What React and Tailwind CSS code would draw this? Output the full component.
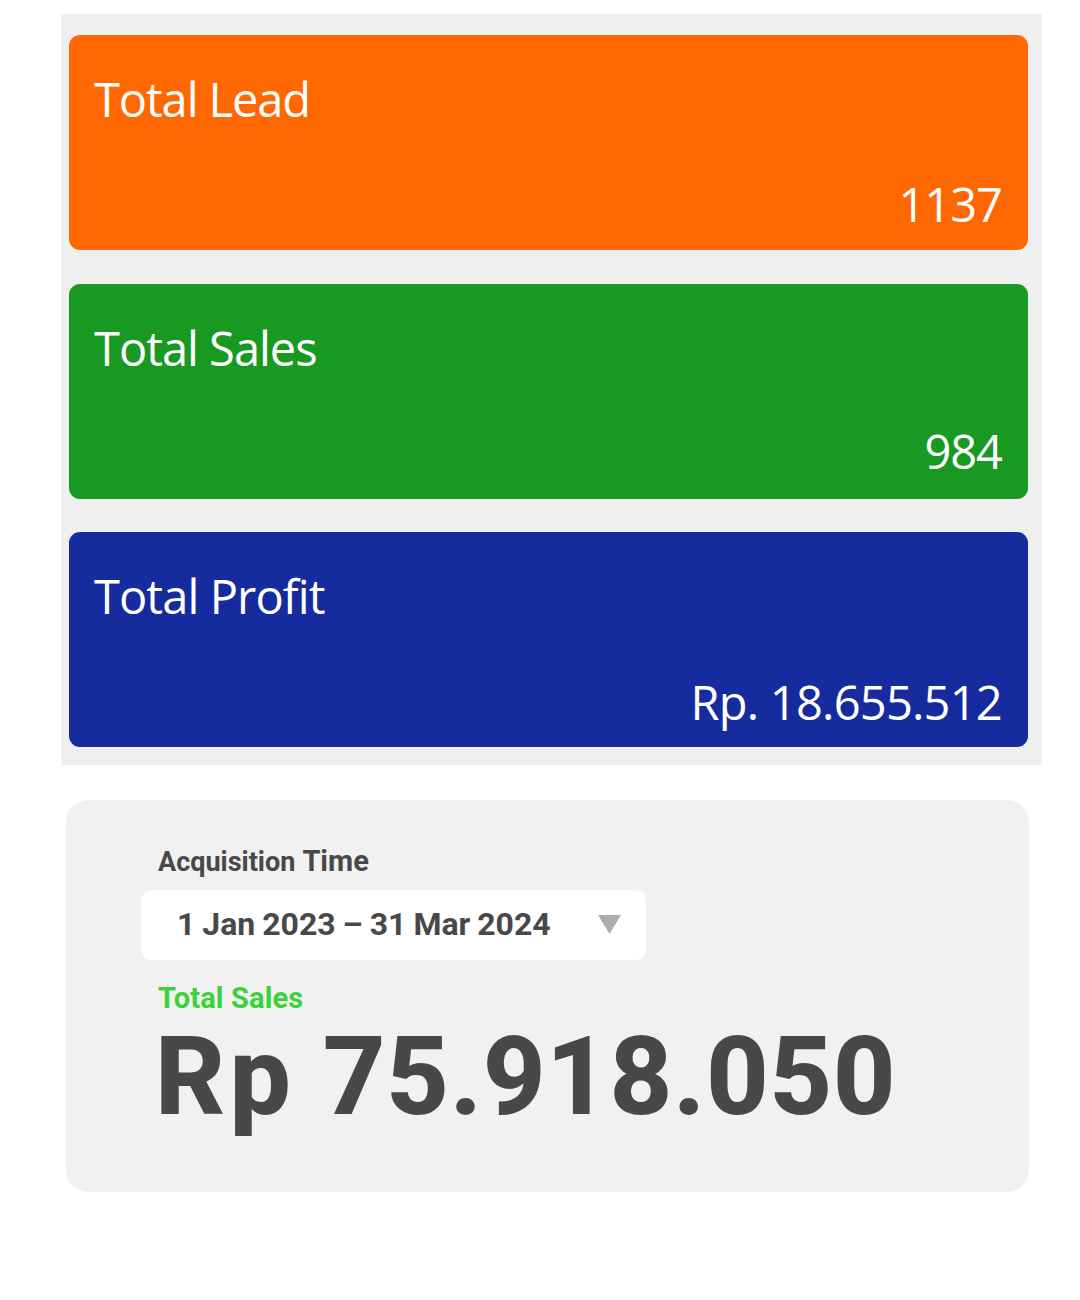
import React from 'react';

const stats = [
  {
    label: 'Total Lead',
    value: '1137',
    box: 'h-[215px] bg-[#ff6700] mb-[34px] pb-[14px]',
    labelSpacing: 'tracking-[-1.1px]',
    valueSpacing: 'tracking-[-1px]',
  },
  {
    label: 'Total Sales',
    value: '984',
    box: 'h-[215px] bg-[#189922] mb-[33px] pb-[16px]',
    labelSpacing: 'tracking-[-1px]',
    valueSpacing: 'tracking-[-1px]',
  },
  {
    label: 'Total Profit',
    value: 'Rp. 18.655.512',
    box: 'h-[215px] bg-[#162b9d] pb-[13px]',
    labelSpacing: 'tracking-[-0.9px]',
    valueSpacing: 'tracking-[-0.75px]',
  },
];

function StatCard({ stat }) {
  return (
    <div
      className={`flex flex-col justify-between rounded-[11px] pt-[32px] pr-[26px] pl-[25px] font-['Open_Sans',sans-serif] text-[47px] leading-[64px] font-[430] text-white ${stat.box}`}
    >
      <div>
        <span className={stat.labelSpacing}>{stat.label}</span>
      </div>
      <div className="text-right">
        <span className={stat.valueSpacing}>{stat.value}</span>
      </div>
    </div>
  );
}

function SalesSummary() {
  return (
    <div className="mt-[35px] ml-[66px] h-[392px] w-[963px] rounded-[22px] bg-[#f1f1f1] pt-[44px] pl-[75px] font-['Roboto',sans-serif] font-bold text-[#484848]">
      <div className="flex h-[46px] items-baseline gap-[7px] pl-[17px] whitespace-nowrap">
        <span className="text-[27px] leading-[34px]">Acquisition</span>
        <span className="text-[29px] leading-[34px]">Time</span>
      </div>

      {/* Date range picker */}
      <div className="flex h-[70px] w-[505px] items-center justify-between rounded-[11px] bg-white pr-[25px] pb-[2px] pl-[36px]">
        <span className="text-[32px] leading-[38px] [word-spacing:-1px] whitespace-nowrap">
          1 Jan 2023 – 31 Mar 2024
        </span>
        <svg width="23" height="19" viewBox="0 0 23 19" fill="#adadad">
          <path d="M0 0H23L11.5 19Z" />
        </svg>
      </div>

      <div className="mt-[20px] pl-[17px] text-[29px] leading-[36px] tracking-[0.15px] text-[#3bd13b]">
        <span>Total Sales</span>
      </div>
      <div className="flex gap-[28px] pl-[14px] text-[109px] leading-[122px] font-extrabold whitespace-nowrap">
        <span className="tracking-[4px]">Rp</span>
        <span className="tracking-[0.6px]">75.918.050</span>
      </div>
    </div>
  );
}

function App() {
  return (
    <div className="h-[1300px] w-[1080px] overflow-hidden bg-white pt-[14px]">
      <div className="ml-[61px] h-[751px] w-[981px] bg-[#efefef] pt-[21px] pr-[14px] pl-[8px]">
        {stats.map((stat) => (
          <StatCard key={stat.label} stat={stat} />
        ))}
      </div>
      <SalesSummary />
    </div>
  );
}

export default App;
